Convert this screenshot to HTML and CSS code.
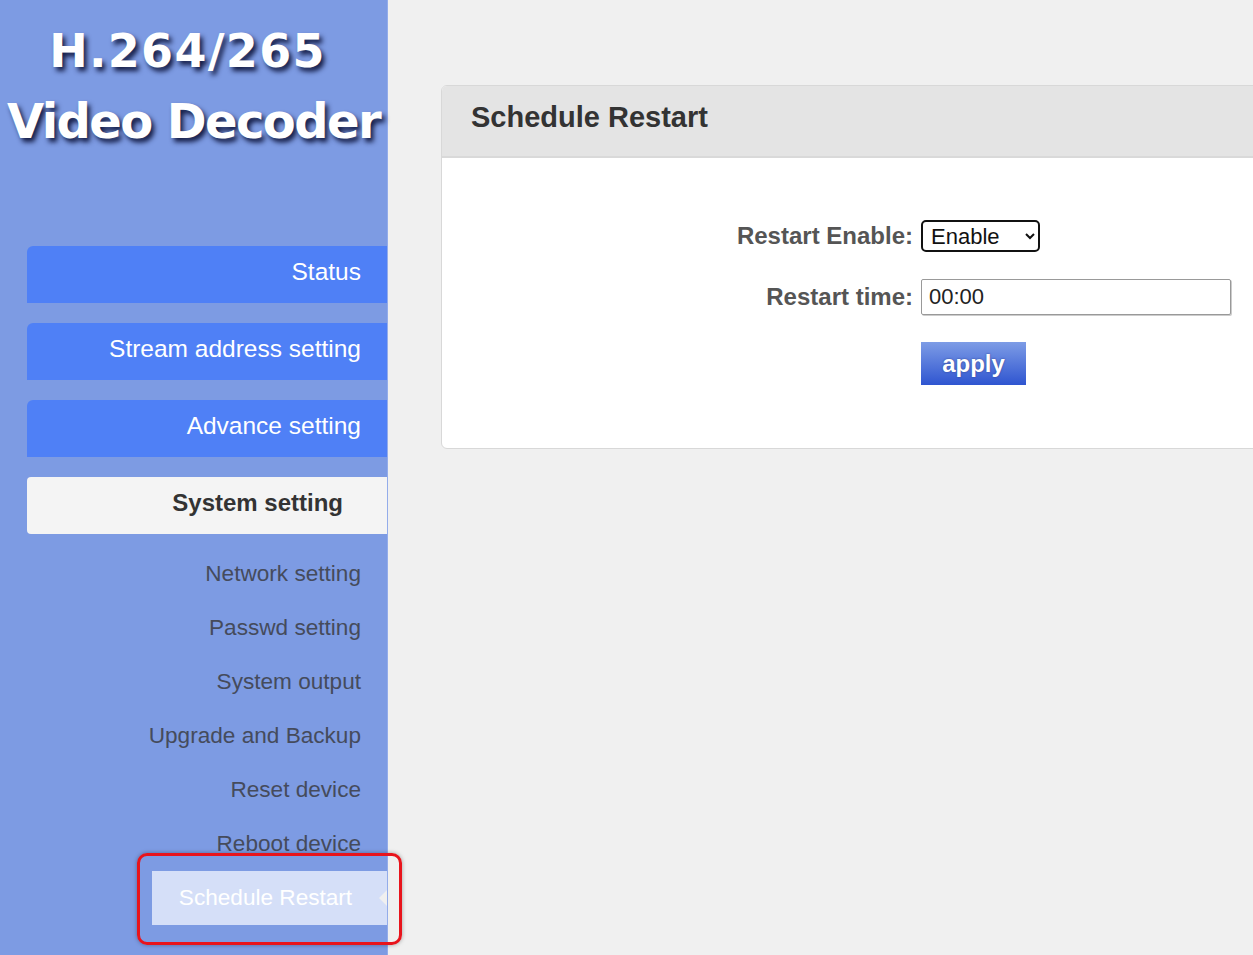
FILE: index.html
```html
<!DOCTYPE html>
<html lang="en">
<head>
    <meta charset="UTF-8">
    <title>Schedule Restart</title>
    <link rel="stylesheet" href="styles.css">
</head>
<body>
    <div class="sidebar">
        <div class="logo">
            <div class="logo-line1">H.264/265</div>
            <div class="logo-line2">Video Decoder</div>
        </div>

        <ul class="nav">
            <li class="nav-item">Status</li>
            <li class="nav-item">Stream address setting</li>
            <li class="nav-item">Advance setting</li>
            <li class="nav-item open">System setting</li>
        </ul>

        <ul class="subnav">
            <li>Network setting</li>
            <li>Passwd setting</li>
            <li>System output</li>
            <li>Upgrade and Backup</li>
            <li>Reset device</li>
            <li>Reboot device</li>
            <li class="active">Schedule Restart</li>
        </ul>
    </div>

    <div class="main">
        <div class="panel">
            <div class="panel-head">Schedule Restart</div>
            <div class="panel-body">
                <div class="form-row">
                    <label>Restart Enable:</label>
                    <select class="sel">
                        <option>Enable</option>
                        <option>Disable</option>
                    </select>
                </div>
                <div class="form-row">
                    <label>Restart time:</label>
                    <input class="txt" type="text" value="00:00">
                </div>
                <div class="form-row">
                    <span></span>
                    <button class="apply-btn">apply</button>
                </div>
            </div>
        </div>
    </div>

    <div class="mark"></div>
</body>
</html>
```

FILE: styles.css
```css
* {
    margin: 0;
    padding: 0;
    box-sizing: border-box;
}

body {
    font-family: "Liberation Sans", Arial, sans-serif;
    background: #f0f0f0;
    display: flex;
    height: 955px;
    overflow: hidden;
    position: relative;
}

.sidebar {
    width: 388px;
    flex-shrink: 0;
    background: #7d9be3;
    border-right: 1px solid #93acea;
}

.logo {
    font-family: "DejaVu Sans", Verdana, sans-serif;
    font-weight: bold;
    color: #fff;
    text-align: center;
    text-shadow: 3px 4px 5px #141c45;
    padding-top: 20px;
    height: 246px;
}

.logo-line1 {
    font-size: 46px;
    letter-spacing: 1.3px;
    line-height: 62px;
    padding-right: 12px;
}

.logo-line2 {
    font-size: 48px;
    letter-spacing: -1.6px;
    line-height: 78px;
}

.nav {
    list-style: none;
    margin-left: 27px;
}

.nav-item {
    height: 57px;
    line-height: 52px;
    margin-bottom: 20px;
    background: #4f80f6;
    color: #fff;
    font-size: 24.5px;
    text-align: right;
    padding-right: 26px;
    border-radius: 6px 0 0 0;
}

.nav-item.open {
    background: #f4f4f4;
    color: #333;
    font-weight: bold;
    font-size: 24px;
    padding-right: 44px;
    border-radius: 4px 0 0 4px;
    margin-bottom: 13px;
}

.subnav {
    list-style: none;
}

.subnav li {
    height: 54px;
    line-height: 54px;
    font-size: 22.6px;
    color: #454b5c;
    text-align: right;
    padding-right: 26px;
}

.subnav li.active {
    margin-left: 152px;
    background: #d5dff8;
    color: #fff;
    text-align: center;
    padding-right: 8px;
    position: relative;
}

.subnav li.active::after {
    content: "";
    position: absolute;
    right: 0;
    top: 19px;
    border-style: solid;
    border-width: 8px 8px 8px 0;
    border-color: transparent #f0f0f0 transparent transparent;
}

.main {
    flex: 1;
    padding: 85px 0 0 53px;
}

.panel {
    width: 860px;
    background: #fff;
    border: 1px solid #d8d8d8;
    border-radius: 6px 0 0 6px;
    overflow: hidden;
}

.panel-head {
    height: 72px;
    line-height: 62px;
    background: #e4e4e4;
    border-bottom: 2px solid #d9d9d9;
    padding-left: 29px;
    font-size: 29px;
    font-weight: bold;
    color: #333;
}

.panel-body {
    height: 290px;
    padding-top: 62px;
}

.form-row {
    display: grid;
    grid-template-columns: 471px auto;
    column-gap: 8px;
    align-items: center;
    margin-bottom: 27px;
}

.form-row label {
    text-align: right;
    font-size: 24px;
    font-weight: bold;
    color: #555;
}

.sel {
    width: 119px;
    height: 32px;
    font-family: "Liberation Sans", Arial, sans-serif;
    font-size: 22px;
    color: #111;
    border: 2px solid #111;
    border-radius: 5px;
    background: #fff;
    padding-left: 4px;
}

.txt {
    width: 310px;
    height: 36px;
    font-family: "Liberation Sans", Arial, sans-serif;
    font-size: 22px;
    color: #222;
    border: 1px solid #999;
    border-radius: 2px;
    padding-left: 7px;
    box-shadow: 1px 1px 0 #ccc;
}

.apply-btn {
    justify-self: start;
    width: 105px;
    height: 43px;
    font-family: "Liberation Sans", Arial, sans-serif;
    font-size: 24px;
    font-weight: bold;
    color: #fff;
    border: none;
    background: linear-gradient(#7d9ce6, #2f55d0);
    text-shadow: 0 0 2px #2a3f8a;
}

.mark {
    position: absolute;
    left: 137px;
    top: 853px;
    width: 265px;
    height: 92px;
    border: 3px solid #e8141c;
    border-radius: 10px;
    box-shadow: 0 0 4px rgba(0, 0, 0, 0.35);
}
```
